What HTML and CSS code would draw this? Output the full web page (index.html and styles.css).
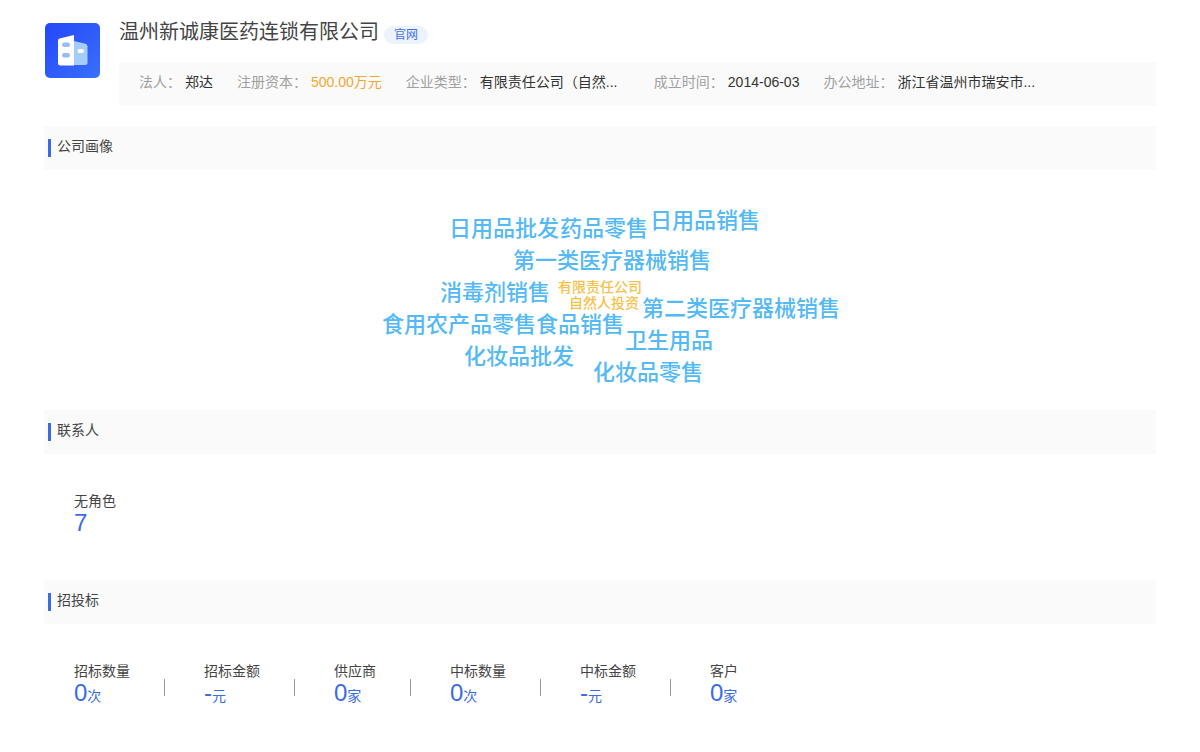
FILE: index.html
```html
<!DOCTYPE html>
<html lang="zh-CN">
<head>
<meta charset="utf-8">
<title>温州新诚康医药连锁有限公司</title>
<link rel="stylesheet" href="styles.css">
</head>
<body>
<main class="page">
  <header class="company">
    <svg class="logo" viewBox="0 0 55 55" aria-hidden="true">
      <defs>
        <linearGradient id="logo-bg" x1="0" y1="0" x2="1" y2="1">
          <stop offset="0" stop-color="#2446f8"/>
          <stop offset="1" stop-color="#3970fb"/>
        </linearGradient>
      </defs>
      <rect width="55" height="55" rx="5" fill="url(#logo-bg)"/>
      <path d="M29 18 40.500 20.800Q42.500 21.300 42.500 23.500V39.500Q42.500 42 40 42H29Z" fill="#a5cdfb"/>
      <path d="M14.500 15.500 29 12V42.500H15.500Q13 42.500 13 40V17.500Q13 16 14.500 15.500Z" fill="#fff"/>
      <rect x="17" y="19.500" width="8" height="4.500" rx="2.200" fill="#98bdf3"/>
      <rect x="17" y="30" width="8" height="4.500" rx="2.200" fill="#98bdf3"/>
      <rect x="32.500" y="26" width="6.500" height="4" rx="2" fill="#fff"/>
    </svg>
    <div class="company-main">
      <div class="title-row">
        <h1 class="title">温州新诚康医药连锁有限公司</h1>
        <a class="site-link" href="#">官网</a>
      </div>
      <dl class="facts">
        <div class="fact"><dt>法人：</dt><dd>郑达</dd></div>
        <div class="fact"><dt>注册资本：</dt><dd class="money">500.00万元</dd></div>
        <div class="fact"><dt>企业类型：</dt><dd class="wide">有限责任公司（自然...</dd></div>
        <div class="fact"><dt>成立时间：</dt><dd>2014-06-03</dd></div>
        <div class="fact"><dt>办公地址：</dt><dd class="wide">浙江省温州市瑞安市...</dd></div>
      </dl>
    </div>
  </header>

  <section>
    <h2 class="section-title">公司画像</h2>
    <div class="cloud-area">
      <div class="cloud">
        <span class="word w1">日用品批发</span>
        <span class="word w2">药品零售</span>
        <span class="word w3">日用品销售</span>
        <span class="word w4">第一类医疗器械销售</span>
        <span class="word w5">消毒剂销售</span>
        <span class="word small w6">有限责任公司</span>
        <span class="word small w7">自然人投资</span>
        <span class="word w8">第二类医疗器械销售</span>
        <span class="word w9">食用农产品零售</span>
        <span class="word w10">食品销售</span>
        <span class="word w11">卫生用品</span>
        <span class="word w12">化妆品批发</span>
        <span class="word w13">化妆品零售</span>
      </div>
    </div>
  </section>

  <section>
    <h2 class="section-title">联系人</h2>
    <dl class="stats">
      <div class="stat"><dt>无角色</dt><dd><span class="num">7</span></dd></div>
    </dl>
  </section>

  <section>
    <h2 class="section-title">招投标</h2>
    <dl class="stats">
      <div class="stat"><dt>招标数量</dt><dd><span class="num">0</span>次</dd></div>
      <div class="stat"><dt>招标金额</dt><dd><span class="num">-</span>元</dd></div>
      <div class="stat"><dt>供应商</dt><dd><span class="num">0</span>家</dd></div>
      <div class="stat"><dt>中标数量</dt><dd><span class="num">0</span>次</dd></div>
      <div class="stat"><dt>中标金额</dt><dd><span class="num">-</span>元</dd></div>
      <div class="stat"><dt>客户</dt><dd><span class="num">0</span>家</dd></div>
    </dl>
  </section>
</main>
</body>
</html>
```
FILE: styles.css
```css
* {
  box-sizing: border-box;
}

body {
  margin: 0;
  background: #fff;
  color: #444;
  font: 14px/20px "Liberation Sans", "Noto Sans CJK SC", sans-serif;
}

h1, h2, dl, dd {
  margin: 0;
  font-weight: 400;
}

.page {
  padding: 16px 44px 0;
}

.company {
  display: flex;
  gap: 19px;
  margin-bottom: 20px;
  padding-left: 1px;
}

.logo {
  flex: none;
  width: 55px;
  height: 55px;
  margin-top: 7px;
}

.company-main {
  flex: 1;
  min-width: 0;
}

.title-row {
  display: flex;
  align-items: center;
  gap: 5px;
  height: 32px;
  margin-bottom: 14px;
}

.title {
  font-size: 20px;
  line-height: 30px;
}

.site-link {
  margin-top: 6px;
  padding: 0 10px;
  border-radius: 9px;
  background: #edf3fe;
  color: #4270ea;
  font-size: 12px;
  line-height: 18px;
  text-decoration: none;
}

.facts {
  display: flex;
  gap: 24px;
  min-height: 44px;
  padding: 10px 20px;
  background: #fafafa;
  white-space: nowrap;
}

.fact {
  display: flex;
  gap: 4px;
}

.fact dt {
  color: #a0a0a0;
}

.fact dd {
  color: #333;
}

.fact .money {
  color: #f0a732;
}

.fact .wide {
  width: 150px;
}

.section-title {
  display: flex;
  align-items: flex-start;
  gap: 6px;
  min-height: 44px;
  padding: 10px 4px;
  background: #fafafa;
  font-size: 14px;
  line-height: 20px;
}

.section-title::before {
  content: "";
  width: 3px;
  height: 18px;
  margin-top: 3px;
  background: #3b6ae6;
}

.cloud-area {
  display: flex;
  justify-content: center;
  height: 240px;
}

.cloud {
  position: relative;
  width: 500px;
}

.word {
  position: absolute;
  color: #54b9f4;
  font-size: 22px;
  font-weight: 500;
  line-height: 32px;
  white-space: nowrap;
}

.word.small {
  color: #f5c147;
  font-size: 14px;
  line-height: 16px;
}

.w1 { left: 99px; top: 43px; }
.w2 { left: 210px; top: 43px; }
.w3 { left: 300px; top: 35px; }
.w4 { left: 163px; top: 75px; }
.w5 { left: 90px; top: 107px; }
.w6 { left: 208px; top: 109px; }
.w7 { left: 219px; top: 125px; }
.w8 { left: 292px; top: 123px; }
.w9 { left: 32px; top: 139px; }
.w10 { left: 186px; top: 139px; }
.w11 { left: 275px; top: 155px; }
.w12 { left: 114px; top: 171px; }
.w13 { left: 243px; top: 187px; }

.stats {
  display: flex;
  min-height: 126px;
  padding: 37px 30px 0;
}

.stat {
  position: relative;
  margin-right: 74px;
}

.stat:not(:last-child)::after {
  content: "";
  position: absolute;
  top: 18px;
  right: -35px;
  width: 1px;
  height: 17px;
  background: #999;
}

.stat dd {
  color: #3b6ae6;
  line-height: 24px;
}

.num {
  font-size: 24px;
}
```
